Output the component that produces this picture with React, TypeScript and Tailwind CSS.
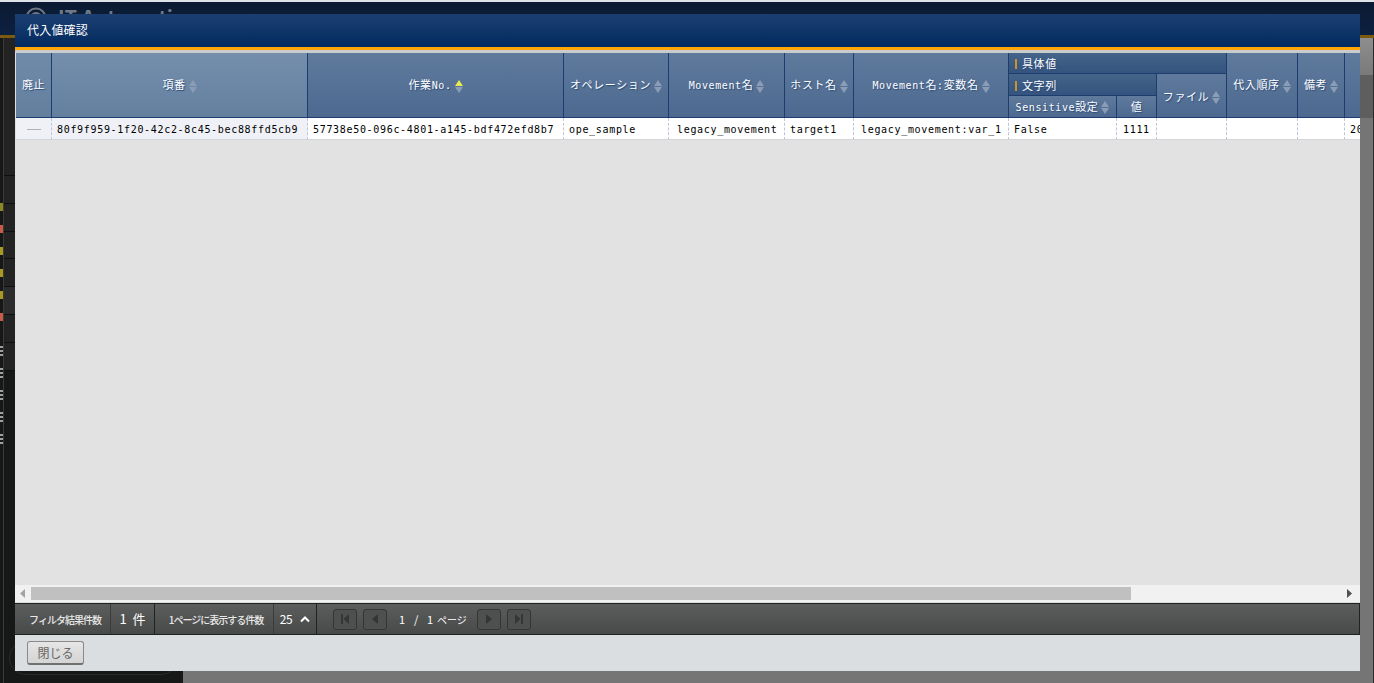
import React from "react";

const FONT = "[font-family:'DejaVu_Sans_Mono','Noto_Sans_CJK_JP',monospace]";
const CJK = "[font-family:'Noto_Sans_CJK_JP','Liberation_Sans',sans-serif]";

function Sort({ active = false }: { active?: boolean }) {
  return (
    <svg width="8" height="13" viewBox="0 0 8 13" className="inline-block align-middle ml-[3px] shrink-0">
      <path d="M4 0 L8 6 L0 6 Z" fill={active ? "#e8ea50" : "#8b9db6"} />
      <path d="M0 7 L8 7 L4 13 Z" fill="#8b9db6" />
    </svg>
  );
}

function L({ children }: { children: React.ReactNode }) {
  return <span className="text-[10px] tracking-[0.6px]">{children}</span>;
}

const thBase =
  "p-0 pt-[2px] font-normal text-white text-center whitespace-nowrap overflow-hidden border-r border-b border-[#1c3d6e] [text-shadow:1px_1px_1px_#2b4a76] text-[11px] leading-[14px] tracking-[0.6px] " + FONT;
const thCol = "bg-gradient-to-b from-[#5f7a9c] to-[#4d6990] " + thBase;
const thGroup = "bg-gradient-to-b from-[#456489] to-[#34537e] text-left !pt-[4px] " + thBase;
const td =
  "p-0 pt-[2px] pl-[5px] h-[22px] text-[10px] leading-[14px] tracking-[0.68px] text-black whitespace-nowrap overflow-hidden border-r border-b [border-right-style:dashed] [border-bottom-style:solid] border-r-[#b9c6da] border-b-[#d2d6da] " + FONT;

const Tick = () => <span className="inline-block w-[2px] h-[10px] bg-[#c8922c] ml-[6px] mr-[5px] align-[-1px]" />;

function PagerBtn({ d }: { d: string }) {
  return (
    <button className="w-[24px] h-[21px] rounded-[3px] border border-[#343635] bg-[#4e504f] flex items-center justify-center">
      <svg width="12" height="12" viewBox="0 0 12 12">
        <path d={d} fill="#343635" />
      </svg>
    </button>
  );
}

function SideRow({ h, bg = "bg-[#222322]" }: { h: number; bg?: string }) {
  return <div style={{ height: h }} className={"shrink-0 border-b border-[#0f0f0f] " + bg} />;
}

function Mark({ color }: { color: string }) {
  return (
    <div className="h-[22px] flex items-center shrink-0">
      <div style={{ backgroundColor: color }} className="w-[3px] h-[8px]" />
    </div>
  );
}

function Stripes() {
  return (
    <div className="h-[22px] shrink-0 flex flex-col gap-[2px] pt-[1px]">
      <div className="h-[2px] bg-[#a0a0a0]" />
      <div className="h-[2px] bg-[#a0a0a0]" />
      <div className="h-[2px] bg-[#a0a0a0]" />
    </div>
  );
}

export default function App() {
  const widths = [36, 256, 256, 105, 116, 69, 155, 108, 40, 70, 71, 47, 200];
  return (
    <div className="relative w-[1374px] h-[683px] overflow-hidden bg-[#727272]">
      {/* page behind the dialog */}
      <div className="flex flex-col h-full">
        <div className="h-[38px] shrink-0 flex flex-col">
          <div className="h-[2px] bg-[#dfe3e8]" />
          <div className="flex-1 bg-gradient-to-b from-[#0b1a31] to-[#0c2040] flex items-start pl-[25px] pt-[5px]">
            <svg width="22" height="22" viewBox="0 0 22 22" className="shrink-0">
              <circle cx="11" cy="11" r="9.5" fill="none" stroke="#6f7782" strokeWidth="2" />
              <circle cx="11" cy="11" r="5" fill="none" stroke="#6f7782" strokeWidth="2" />
            </svg>
            <span className={"ml-[11px] text-[#6f7a88] text-[20px] font-bold leading-[24px] -mt-[2px] " + CJK}>IT Automation</span>
          </div>
          <div className="h-[3px] bg-[#7a5a10]" />
        </div>
        <div className="flex flex-1">
          <div className="w-[183px] shrink-0 bg-[#161717] flex">
            <div className="w-[3px] shrink-0 flex flex-col pt-[158px]">
              <Mark color="#8a8a20" />
              <Mark color="#c85a4a" />
              <Mark color="#a89a20" />
              <Mark color="#a89a20" />
              <Mark color="#a89a20" />
              <Mark color="#c85a4a" />
              <div className="h-[17px] shrink-0" />
              <Stripes />
              <Stripes />
              <Stripes />
              <Stripes />
              <Stripes />
            </div>
            <div className="w-[1px] shrink-0 bg-[#3a3a3a] h-full" />
            <div className="flex-1 flex flex-col">
              <SideRow h={138} />
              <SideRow h={28} />
              <SideRow h={28} />
              <SideRow h={27} />
              <SideRow h={28} />
              <SideRow h={28} bg="bg-[#2c2c2c]" />
              <SideRow h={28} />
              <SideRow h={28} />
              <div className="flex-1" />
              <div className="h-[34px] ml-[5px] mr-[5px] mb-[8px] rounded-[17px] border border-[#2a2a2a]" />
            </div>
          </div>
          <div className="flex-1 flex flex-col border-r border-[#2a2a2a]">
            <div className="h-[37px] bg-gradient-to-b from-[#8e8e8e] to-[#7a7a7a]" />
            <div className="h-[43px] bg-[#5e5e5e]" />
            <div className="flex-1 bg-[#757575]" />
          </div>
        </div>
      </div>

      {/* dialog */}
      <div className="absolute left-[15px] top-[14px] w-[1345px] h-[657px] flex flex-col bg-[#e2e2e2]">
        <div className={"h-[33px] shrink-0 bg-gradient-to-b from-[#1b3f70] to-[#032a60] pl-[12px] pb-[1px] flex items-center text-white text-[12px] tracking-[0.2px] " + CJK}>
          代入値確認
        </div>
        <div className="h-[3px] shrink-0 bg-[#ffa50a]" />
        <div className="h-[3px] shrink-0 bg-[#c9cbcd]" />

        <div className="flex-1 min-h-0 overflow-hidden pl-[1px] pr-[1px]">
          <table className="table-fixed border-separate border-spacing-0 w-[1529px]">
            <colgroup>
              {widths.map((w, i) => (
                <col key={i} style={{ width: w }} />
              ))}
            </colgroup>
            <thead>
              <tr className="h-[21px]">
                <th rowSpan={3} className={"bg-gradient-to-b from-[#708aa9] to-[#647f9e] " + thBase}>廃止</th>
                <th rowSpan={3} className={"bg-gradient-to-b from-[#748eac] to-[#657f9f] " + thBase}>項番<Sort /></th>
                <th rowSpan={3} className={thCol}>作業<L>No.</L><Sort active /></th>
                <th rowSpan={3} className={thCol}>オペレーション<Sort /></th>
                <th rowSpan={3} className={thCol}><L>Movement</L>名<Sort /></th>
                <th rowSpan={3} className={thCol}>ホスト名<Sort /></th>
                <th rowSpan={3} className={thCol}><L>Movement</L>名<L>:</L>変数名<Sort /></th>
                <th colSpan={3} className={thGroup}><Tick />具体値</th>
                <th rowSpan={3} className={thCol}>代入順序<Sort /></th>
                <th rowSpan={3} className={thCol}>備考<Sort /></th>
                <th rowSpan={3} className={thCol}>最終更新日時<Sort /></th>
              </tr>
              <tr className="h-[22px]">
                <th colSpan={2} className={thGroup}><Tick />文字列</th>
                <th rowSpan={2} className={thCol + " !pt-[4px]"}>ファイル<Sort /></th>
              </tr>
              <tr className="h-[22px]">
                <th className={thCol}><L>Sensitive</L>設定<Sort /></th>
                <th className={thCol}>値</th>
              </tr>
            </thead>
            <tbody>
              <tr>
                <td className={td + " bg-[#eff1f6] !pl-0 text-center"}>
                  <span className="inline-block w-[14px] h-[1px] bg-[#b0b4b8] align-middle" />
                </td>
                <td className={td + " bg-[#eff1f6]"}>80f9f959-1f20-42c2-8c45-bec88ffd5cb9</td>
                <td className={td + " bg-white"}>57738e50-096c-4801-a145-bdf472efd8b7</td>
                <td className={td + " bg-white"}>ope_sample</td>
                <td className={td + " bg-white !pl-[8px]"}>legacy_movement</td>
                <td className={td + " bg-white"}>target1</td>
                <td className={td + " bg-white !pl-[7px]"}>legacy_movement:var_1</td>
                <td className={td + " bg-white"}>False</td>
                <td className={td + " bg-white !pl-[6px]"}>1111</td>
                <td className={td + " bg-white"} />
                <td className={td + " bg-white"} />
                <td className={td + " bg-white"} />
                <td className={td + " bg-white"}>2021/06/01 10:00:00</td>
              </tr>
            </tbody>
          </table>
        </div>

        {/* horizontal scrollbar */}
        <div className="h-[18px] shrink-0 bg-[#f1f1f1] border-b border-[#dcdcdc] flex items-center pl-[5px] pr-[7px]">
          <svg width="6" height="9" viewBox="0 0 6 9"><path d="M5 0 L0 4.5 L5 9 Z" fill="#a3a3a3" /></svg>
          <div className="ml-[5px] w-[1100px] h-[13px] bg-[#c0c0c0]" />
          <div className="flex-1" />
          <svg width="6" height="9" viewBox="0 0 6 9"><path d="M0 0 L5 4.5 L0 9 Z" fill="#505050" /></svg>
        </div>

        {/* pager bar */}
        <div className={"h-[32px] shrink-0 flex items-stretch bg-gradient-to-b from-[#5c5e5d] to-[#484a49] border-y border-[#202222] border-r text-white " + CJK}>
          <div className="w-[96px] flex items-center justify-center text-[10px] tracking-[-1px] font-medium text-[#e8e8e8] border-r border-[#3a3c3b] pl-[5px]">フィルタ結果件数</div>
          <div className="w-[44px] flex items-center justify-center text-[13px] gap-[6px] border-r border-[#202222]">
            <span>1</span><span>件</span>
          </div>
          <div className="w-[119px] flex items-center justify-center text-[10px] tracking-[-1px] font-medium text-[#e8e8e8] border-r border-[#3a3c3b] pl-[4px]">1ページに表示する件数</div>
          <div className="w-[43px] flex items-center justify-center gap-[8px] text-[12px] border-r border-[#202222]">
            <span className="tracking-[-0.5px]">25</span>
            <svg width="10" height="7" viewBox="0 0 10 7"><path d="M1 5.5 L5 1.5 L9 5.5" fill="none" stroke="#fff" strokeWidth="2" /></svg>
          </div>
          <div className="flex items-center ml-[16px] gap-[6px]">
            <PagerBtn d="M2 1 H4 V11 H2 Z M10 1 V11 L4.5 6 Z" />
            <PagerBtn d="M9 1 V11 L3 6 Z" />
          </div>
          <div className="w-[90px] flex items-center text-[11px] pl-[12px]">
            <span className="w-[15px]">1</span>
            <span className="w-[13px]">/</span>
            <span className="w-[10px]">1</span>
            <span className="text-[10px] whitespace-nowrap">ページ</span>
          </div>
          <div className="flex items-center gap-[6px]">
            <PagerBtn d="M3 1 V11 L9 6 Z" />
            <PagerBtn d="M2 1 V11 L7.5 6 Z M8 1 H10 V11 H8 Z" />
          </div>
        </div>

        {/* footer */}
        <div className="h-[36px] shrink-0 bg-[#dadee1] flex items-center pl-[12px]">
          <button className={"w-[57px] h-[24px] rounded-[3px] border border-[#8a8a8a] border-b-2 border-b-[#707070] bg-gradient-to-b from-[#e6e6e6] to-[#d4d4d4] text-[12px] text-[#666] " + CJK}>
            閉じる
          </button>
        </div>
      </div>
    </div>
  );
}
